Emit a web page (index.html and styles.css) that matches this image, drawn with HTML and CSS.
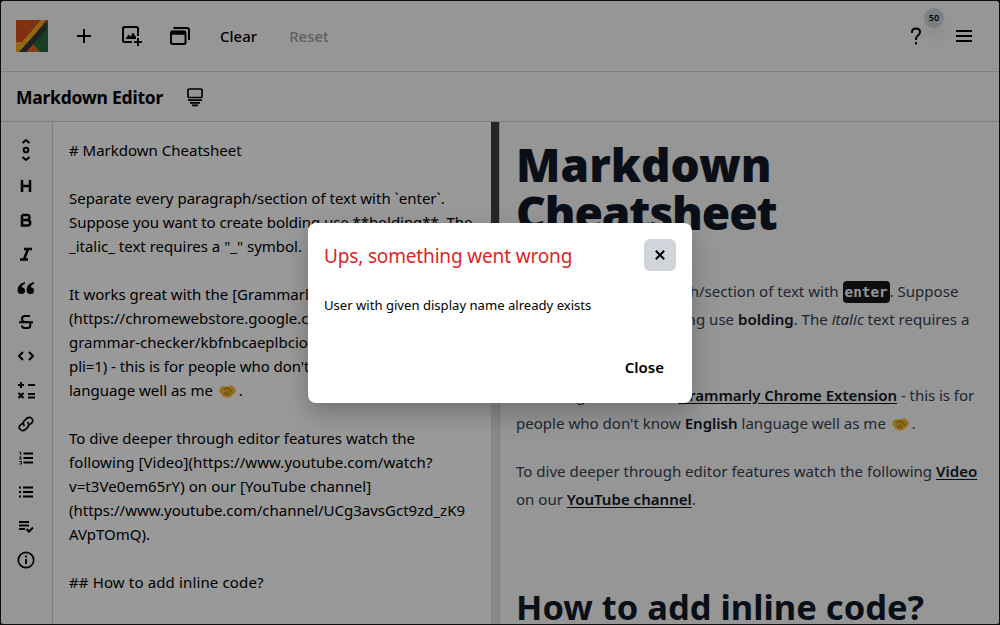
FILE: index.html
```html
<!DOCTYPE html>
<html lang="en">
<head>
<meta charset="utf-8">
<title>Markdown Editor</title>
<link rel="stylesheet" href="styles.css">
</head>
<body>
<div class="app">
  <header class="topbar">
    <svg class="logo" viewBox="0 0 32 32"><rect width="32" height="32" fill="#d9501f"/><path d="M32 0V32H22L15 25Z" fill="#2c6b3c"/><path d="M28 12L32 16V32H25L16 24Z" fill="#256b3e"/><path d="M17 24L24 32H11Z" fill="#e56a20"/><path d="M25 0H30L5 32H0V22H6Z" fill="#f0ac22"/><path d="M30 2V10L10 32H3Z" fill="#36373b"/></svg>
    <button class="icon-btn"><svg viewBox="0 0 24 24"><path d="M12 5V19M5 12H19"/></svg></button>
    <button class="icon-btn"><svg viewBox="0 0 24 24"><path d="M12 18H4.500Q3 18 3 16.500V4.500Q3 3 4.500 3H16.500Q18 3 18 4.500V12M18 14V22M14 18H22"/><path class="fill" d="M5.500 15L8.500 10.500L10.500 12.500L13 8.500L16 13V15Z"/></svg></button>
    <button class="icon-btn"><svg viewBox="0 0 24 24"><rect x="3" y="7.500" width="14.500" height="12.500" rx="1.500"/><path d="M3 8.800H17.500" class="thick"/><path d="M5.500 4H19Q21 4 21 6V16"/></svg></button>
    <button class="text-btn clear">Clear</button>
    <button class="text-btn disabled">Reset</button>
    <div class="right-actions">
      <button class="icon-btn help"><svg viewBox="0 0 24 24"><path d="M8 9V8Q8 4.500 12 4.500T16 8Q16 10 14 11.500T12 15V16M12 18V20.500"/></svg><span class="badge">50</span></button>
      <button class="icon-btn"><svg viewBox="0 0 24 24"><path d="M4 7H20M4 12H20M4 17H20"/></svg></button>
    </div>
  </header>
  <div class="titlebar">
    <h1 class="title">Markdown Editor</h1>
    <svg class="view-icon" viewBox="0 0 24 24"><rect x="5" y="4" width="14" height="8.500" rx="1"/><path d="M5 15.200H19M7 17.800H17M9 20.400H15"/></svg>
  </div>
  <main class="workspace">
    <nav class="tools">
      <svg class="first" viewBox="0 0 24 24"><path d="M8.500 5L12 2L15.500 5M8.500 19L12 22L15.500 19"/><circle cx="12" cy="12" r="2.300"/></svg>
      <svg viewBox="0 0 24 24"><path class="heavy" d="M8 6V18M16 6V18M8 12H16"/></svg>
      <svg viewBox="0 0 24 24"><path class="heavy" d="M8 7H13Q15.500 7 15.500 9.200T13 12H8M8 7V17.500H13.500Q16.200 17.500 16.200 14.800T13.500 12"/></svg>
      <svg viewBox="0 0 24 24"><path class="heavy" d="M10 7H18M6 17.500H14M14 7L10 17.500"/></svg>
      <svg viewBox="0 0 24 24"><path class="fill" d="M11 6Q3.500 8 3.500 14Q3.500 18 7.300 18Q11 18 11 14.700Q11 11.500 7.500 11.300Q8 9 11 7.500ZM20 6Q12.500 8 12.500 14Q12.500 18 16.300 18Q20 18 20 14.700Q20 11.500 16.500 11.300Q17 9 20 7.500Z"/></svg>
      <svg viewBox="0 0 24 24"><path d="M5 12.200H19M16 6H11Q8 6 8 9T11 12H14M8 15.500Q8 18 11 18H13.500Q16.300 18 16.300 15.500V12.500"/></svg>
      <svg viewBox="0 0 24 24"><path d="M9 8L5 12L9 16M15 8L19 12L15 16"/></svg>
      <svg viewBox="0 0 24 24"><path d="M4 7H10M7 4V10M14 7H21M4.500 15L9.500 20M9.500 15L4.500 20M14 16H21M14 19.500H21"/></svg>
      <svg viewBox="0 0 24 24"><path class="ring" d="M10.500 14Q8 11 10.500 8.500L13 6.200Q15.500 4.300 17.800 6.500T17.500 11L15.500 13M13.500 10Q16 13 13.500 15.500L11 17.800Q8.500 19.700 6.200 17.500T6.500 13L8.500 11"/></svg>
      <svg viewBox="0 0 24 24"><path d="M9.500 7.500H19M9.500 12H19M9.500 16.500H19"/><path class="thin" d="M5.500 6H6.700V9M5.500 11H7.200L5.500 13H7.500M5.500 15.500H7.500V18H5.500"/></svg>
      <svg viewBox="0 0 24 24"><path d="M9 7.500H19M9 12H19M9 16.500H19M5 7.500H7M5 12H7M5 16.500H7"/></svg>
      <svg viewBox="0 0 24 24"><path d="M5 8H15M5 11.500H15M5 15H11M12.500 15L15 17.500L19 13.500"/></svg>
      <svg viewBox="0 0 24 24"><circle cx="12" cy="12" r="7.700" class="ring"/><path d="M12 11V16M12 7.500V9.500"/></svg>
    </nav>
    <section class="editor"># Markdown Cheatsheet

Separate every paragraph/section of text with `enter`.
<span class="tight">Suppose you want to create bolding use **bolding**. The</span>
_italic_ text requires a "_" symbol.

It works great with the [Grammarly Chrome Extension]
(https://chromewebstore.google.com/detail/grammarly-
grammar-checker/kbfnbcaeplbcioakkpcpgfkobkghlhen?
<span class="tight">pli=1) - this is for people who don't know **English**</span>
language well as me <svg class="emoji" viewBox="0 0 18 14"><path d="M1 3L5 1L9 2L13 0L17 3L18 7L13 12L9 14L4 12L0 7Z" fill="#f5bd35"/><path d="M5 5L9 3L14 8M5 8L8 11M8 7L11 11" stroke="#c88617" fill="none"/></svg>.

To dive deeper through editor features watch the
<span class="loose">following [Video](https://www.youtube.com/watch?
v=t3Ve0em65rY) on our [YouTube channel]</span>
(https://www.youtube.com/channel/UCg3avsGct9zd_zK9
AVpTOmQ).

<span class="looser">## How to add inline code?</span>
</section>
    <div class="scrollbar"><div class="thumb"></div></div>
    <article class="preview">
      <h1>Markdown<br><span class="condensed">Cheatsheet</span></h1>
      <p>Separate every paragraph/section of text with <code>enter</code>. Suppose<br>you want to create bolding use <b>bolding</b>. The <i>italic</i> text requires a<br>"_" symbol.</p>
      <p><span class="tight">It works great with the <a>Grammarly Chrome Extension</a> - this is for</span><br>people who don't know <b>English</b> language well as me <svg class="emoji" viewBox="0 0 18 14"><path d="M1 3L5 1L9 2L13 0L17 3L18 7L13 12L9 14L4 12L0 7Z" fill="#f5bd35"/><path d="M5 5L9 3L14 8M5 8L8 11M8 7L11 11" stroke="#c88617" fill="none"/></svg>.</p>
      <p>To dive deeper through editor features watch the following <a>Video</a><br>on our <a>YouTube channel</a>.</p>
      <h2>How to add inline code?</h2>
    </article>
  </main>
  <div class="overlay">
    <div class="modal" role="dialog">
      <div class="modal-head">
        <h3>Ups, something went wrong</h3>
        <button class="close-x"><svg viewBox="0 0 12 12"><path d="M1.800 1.800L10.200 10.200M10.200 1.800L1.800 10.200"/></svg></button>
      </div>
      <p class="message">User with given display name already exists</p>
      <button class="close-btn">Close</button>
    </div>
  </div>
</div>
</body>
</html>
```
FILE: styles.css
```css
* { box-sizing: border-box; margin: 0; }
body { background: #0c0c0d; padding: 1px; height: 625px; overflow: hidden; font-family: "Noto Sans", "Open Sans", sans-serif; font-size: 15px; color: #000; }
button { border: 0; padding: 0; background: none; font: inherit; color: inherit; }
svg { display: block; width: 24px; height: 24px; fill: none; stroke: currentColor; stroke-width: 2; flex: none; }
.fill { fill: currentColor; stroke: none; }
.thick { stroke-width: 4; }
.heavy { stroke-width: 2.500; }
.thin { stroke-width: 1; }
.ring { stroke-width: 1.700; }
.tight { letter-spacing: -.06px; }
.loose { letter-spacing: .07px; }
.looser { letter-spacing: .14px; }

.app { position: relative; display: flex; flex-direction: column; height: 623px; background: #fafafa; border-radius: 3px; overflow: hidden; }
.topbar { display: flex; align-items: center; height: 71px; flex: none; padding: 0 23px 0 15px; border-bottom: 1px solid #d4d4d8; }
.logo { width: 32px; height: 32px; stroke: none; margin-right: 24px; }
.icon-btn { position: relative; margin-right: 24px; }
.text-btn { font-weight: 500; margin-right: 32px; }
.clear { margin-left: 4px; }
.disabled { color: #a1a1aa; }
.right-actions { display: flex; margin-left: auto; }
.right-actions .icon-btn:last-child { margin-right: 0; }
.badge { position: absolute; left: 20px; top: -16px; width: 20px; height: 20px; border-radius: 50%; background: #d1d5db; font-size: 9px; font-weight: 600; line-height: 20px; box-shadow: 0 10px 15px -3px #0002; }

.titlebar { display: flex; align-items: center; gap: 20px; height: 50px; flex: none; padding: 0 15px; border-bottom: 1px solid #d4d4d8; }
.title { font-size: 17.500px; font-weight: 700; letter-spacing: -.24px; }
.view-icon { stroke-width: 1.700; }

.workspace { display: flex; flex: 1; min-height: 0; }
.tools { width: 52px; border-right: 1px solid #d4d4d8; padding: 16px 1px 0 0; display: flex; flex-direction: column; align-items: center; gap: 10px; }
.first { margin-bottom: 2px; }
.editor { width: 438px; padding: 16px; background: #fff; line-height: 24px; white-space: pre; overflow: hidden; }
.scrollbar { width: 8px; background: #e4e4e7; }
.thumb { height: 200px; background: #3f3f46; }
.emoji { display: inline-block; width: 17px; height: 13px; stroke: none; vertical-align: -2px; margin: 0 3px 0 2px; }
.preview { flex: 1; border-left: 1px solid #d4d4d8; padding: 18px 16px; line-height: 28px; font-size: 15.050px; color: #374151; white-space: nowrap; overflow: hidden; }
.preview h1 { font-size: 46px; font-weight: 900; line-height: 48px; color: #111827; margin-bottom: 41px; }
.condensed { letter-spacing: -1.100px; }
.preview h2 { font-size: 34.500px; line-height: 40px; color: #111827; margin-top: 74px; }
.preview p { margin-bottom: 20px; }
.preview b, .preview a { font-weight: 600; color: #111827; }
.preview a { text-decoration: underline; text-underline-offset: 2px; }
code { font: bold 14.300px "DejaVu Sans Mono", monospace; background: #18181b; color: #fafafa; border-radius: 4px; padding: 3px 2px; }

.overlay { position: absolute; inset: 0; display: flex; align-items: center; justify-content: center; background: rgba(0, 0, 0, .4); }
.modal { width: 384px; height: 180px; padding: 16px; display: flex; flex-direction: column; background: #fff; border-radius: 8px; box-shadow: 0 10px 25px rgba(0, 0, 0, .25); }
.modal-head { display: flex; justify-content: space-between; align-items: center; }
.modal h3 { font-size: 19px; font-weight: 400; letter-spacing: -.16px; padding-top: 2px; color: #dc2626; }
.close-x { display: flex; align-items: center; justify-content: center; width: 32px; height: 32px; border-radius: 6px; background: #d1d5db; }
.close-x svg { width: 12px; height: 12px; }
.message { font-size: 13.100px; line-height: 20px; margin-top: 24px; }
.close-btn { align-self: flex-end; margin: auto 12px 8px 0; font-weight: 600; line-height: 24px; }
```
